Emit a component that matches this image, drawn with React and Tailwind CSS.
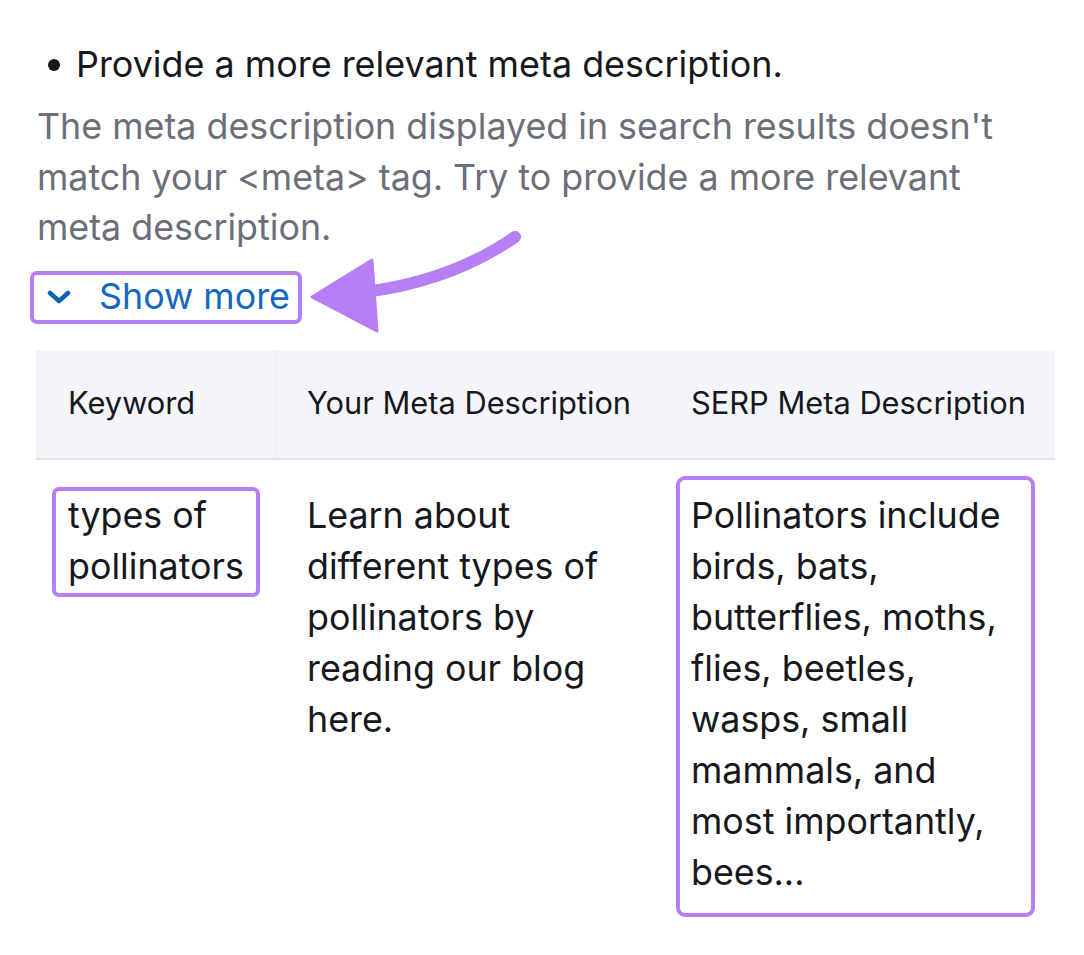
import React from 'react';

const serp = 'Pollinators include birds, bats, butterflies, moths, flies, beetles, wasps, small mammals, and most importantly, bees...';

export default function App() {
  return (
    <div className="relative w-[1084px] h-[955px] bg-white overflow-hidden" style={{ fontFamily: 'Inter, "Noto Sans", sans-serif' }}>
      <div className="pt-[40px] pl-[37px] pr-[20px]">
        {/* Bullet */}
        <div className="flex items-center h-[50px] text-[35.9px] text-[#16181d]">
          <span className="ml-[11px] mr-[16px] w-[12px] h-[12px] rounded-full bg-[#16181d]" />
          <span>Provide a more relevant meta description.</span>
        </div>
        <p className="mt-[11px] text-[35.8px] leading-[50.5px] text-[#6c6e79] w-[1000px]">
          The meta description displayed in search results doesn't match your &lt;meta&gt; tag. Try to provide a more relevant meta description.
        </p>

        {/* Show more */}
        <div className="mt-[18px] -ml-[7px] inline-flex items-center h-[53px] w-[272px] border-4 border-[#b57ff5] rounded-[7px] pl-[13px]">
          <svg width="24" height="14" viewBox="0 0 24 14" className="mr-[28px]">
            <path d="M3 3 L12 11 L21 3" fill="none" stroke="#0a63b8" strokeWidth="4.5" strokeLinecap="round" strokeLinejoin="round" />
          </svg>
          <span className="text-[35.8px] text-[#1468c0] leading-none">Show more</span>
        </div>

        {/* Table */}
        <div className="mt-[26px] -ml-[1px] w-[1019px]">
          <div className="grid grid-cols-[240px_384px_395px] h-[110px] bg-[#f4f5f9] border-b-2 border-[#e1e2ea] text-[30.8px] text-[#16181d]">
            <div className="flex items-center pl-[32px] border-r border-[#eeeff4]">Keyword</div>
            <div className="flex items-center pl-[31px]">Your Meta Description</div>
            <div className="flex items-center pl-[31px]">SERP Meta Description</div>
          </div>
          <div className="grid grid-cols-[240px_384px_395px] pt-[30px] text-[35.8px] leading-[51px] text-[#16181d]">
            <div className="pl-[32px]">
              <div className="relative w-[190px]">
                types of pollinators
                <span className="absolute -left-[16px] -top-[3px] w-[208px] h-[110px] border-4 border-[#b57ff5] rounded-[7px]" />
              </div>
            </div>
            <div className="pl-[31px]">
              <div className="w-[310px]">
                Learn about different types of pollinators by reading our blog here.
              </div>
            </div>
            <div className="pl-[31px]">
              <div className="relative w-[322px]">
                {serp}
                <span className="absolute -left-[15px] -top-[14px] w-[359px] h-[441px] border-4 border-[#b57ff5] rounded-[9px]" />
              </div>
            </div>
          </div>
        </div>
      </div>

      {/* Annotation arrow */}
      <svg className="absolute left-0 top-0 pointer-events-none" width="1084" height="955">
        <path d="M515 237 C470 268 420 285 365 292" fill="none" stroke="#b57ff5" strokeWidth="12" strokeLinecap="round" />
        <path d="M312 297 L372 260 L377 331 Z" fill="#b57ff5" stroke="#b57ff5" strokeWidth="3" strokeLinejoin="round" />
      </svg>
    </div>
  );
}
